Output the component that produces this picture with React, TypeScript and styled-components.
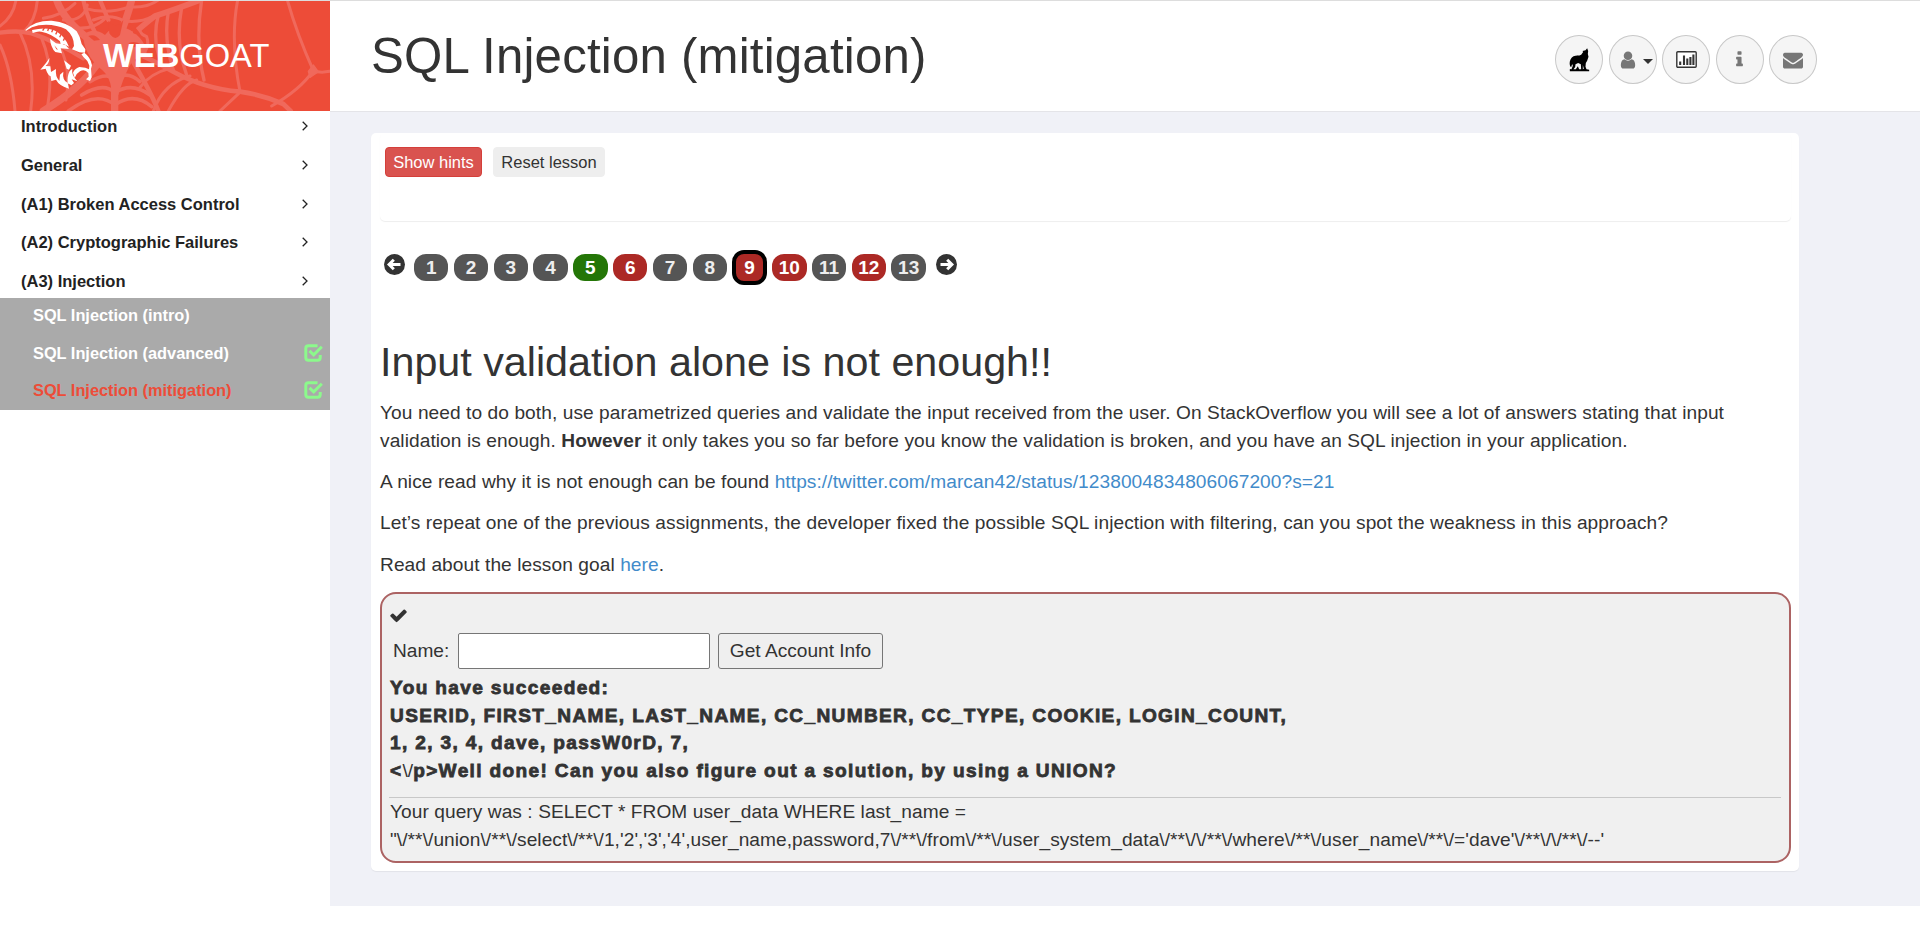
import React from "react";
import styled, { createGlobalStyle, css } from "styled-components";

const GlobalStyle = createGlobalStyle`
  *, *::before, *::after { box-sizing: border-box; }
  html, body { margin: 0; padding: 0; background: #fff; }
  body {
    font-family: "Liberation Sans", Arial, Helvetica, sans-serif;
    font-size: 19.12px;
    line-height: 28.1px;
    color: #333;
  }
`;

const Page = styled.div`
  display: grid;
  grid-template-columns: 330px 1fr;
  grid-template-rows: 111px 794px;
  height: 906px;
  border-top: 1px solid #ddd;
`;

const Brand = styled.div`
  position: relative;
  height: 110px;
  background: #ed4c38;
  overflow: hidden;
`;

const BrandArt = styled.svg`
  position: absolute;
  inset: 0;
  width: 330px;
  height: 110px;
`;

const BrandName = styled.div`
  position: relative;
  padding: 37px 0 0 103px;
  font-size: 32.7px;
  line-height: 36px;
  color: #fff;
`;

const Header = styled.header`
  display: flex;
  justify-content: space-between;
  align-items: flex-start;
  height: 111px;
  padding: 0 103px 0 41px;
  background: #fff;
  border-bottom: 1px solid #e4e4e8;
`;

const LessonTitle = styled.h1`
  margin: 28px 0 0;
  font-size: 49.2px;
  font-weight: 400;
  line-height: 54px;
  letter-spacing: 0.2px;
`;

const HeaderActions = styled.div`
  display: flex;
  gap: 5.4px;
  margin-top: 34px;
`;

const RoundButton = styled.button`
  display: flex;
  align-items: center;
  justify-content: center;
  gap: 5px;
  width: 48px;
  height: 49px;
  padding: 0;
  border: 1px solid #c8c8c8;
  border-radius: 50%;
  background: #f5f5f5;
  color: #777;
`;

const Caret = styled.span`
  border: 5.5px solid transparent;
  border-top: 5.5px solid #333;
  border-bottom: 0;
  margin: 3px -6px 0 0;
`;

const Sidebar = styled.nav`
  background: #fff;
`;

const Category = styled.div`
  display: flex;
  align-items: center;
  justify-content: space-between;
  height: 38.7px;
  padding: 0 22px 0 21px;
  font-size: 16.5px;
  font-weight: 700;
  color: #222;
`;

const CategoryList = styled.div`
  height: 191px;
  margin-top: -5px;
`;

const Lessons = styled.div`
  height: 112px;
  background: #aaa;
`;

const Lesson = styled.div<{ $current?: boolean }>`
  display: flex;
  align-items: center;
  justify-content: space-between;
  height: 37.5px;
  padding: 0 7px 3px 33px;
  font-size: 16.35px;
  font-weight: 700;
  color: ${(p) => (p.$current ? "#ed4c38" : "#fff")};
`;

const Main = styled.main`
  padding: 21px 121px 35px 41px;
  background: #f0f1f7;
`;

const Panel = styled.section`
  height: 738px;
  padding: 0 8px 0 9px;
  border-radius: 5px;
  background: #fff;
  box-shadow: 0 1px 1px rgba(0, 0, 0, 0.06);
`;

const Toolbar = styled.div`
  display: flex;
  gap: 11px;
  height: 88px;
  padding: 14px 5px;
  border-radius: 5px;
  box-shadow: 0 1px 1px rgba(0, 0, 0, 0.07);
`;

const ToolButton = styled.button<{ $danger?: boolean }>`
  width: ${(p) => (p.$danger ? 97 : 112)}px;
  height: 30px;
  padding: 0;
  border: 1px solid ${(p) => (p.$danger ? "#d43f3a" : "#eee")};
  border-radius: 4px;
  background: ${(p) => (p.$danger ? "#d9534f" : "#eee")};
  color: ${(p) => (p.$danger ? "#fff" : "#333")};
  font: inherit;
  font-size: 16.5px;
  line-height: 28px;
  white-space: nowrap;
`;

const Pager = styled.div`
  display: flex;
  align-items: center;
  gap: 5.4px;
  height: 35px;
  margin: 29px 0 54.5px;
  padding-left: 4px;
`;

const ArrowSlot = styled.span<{ $last?: boolean }>`
  display: flex;
  height: 27px;
  margin: ${(p) => (p.$last ? "0 0 0 4.5px" : "0 3.7px 0 0")};
`;

type PageState = "plain" | "solved" | "open";
const stateColor: Record<PageState, string> = {
  plain: "#555",
  solved: "#247607",
  open: "#ac2925",
};

const PageLink = styled.span<{ $state: PageState; $active?: boolean }>`
  display: flex;
  align-items: center;
  justify-content: center;
  width: 34.4px;
  height: 26.5px;
  border-radius: 12px;
  background: ${(p) => stateColor[p.$state]};
  color: ${(p) => (p.$state === "plain" ? "#eee" : "#fff")};
  font-size: 19px;
  font-weight: 700;
  line-height: 26px;
  ${(p) =>
    p.$active &&
    css`
      height: 34.5px;
      border: 4px solid #000;
    `}
`;

const PageHeading = styled.h1`
  margin: 0 0 14.5px;
  font-size: 41.25px;
  font-weight: 400;
  line-height: 45px;
`;

const Paragraph = styled.p`
  margin: 0 0 13.1px;
  letter-spacing: 0.08px;
`;

const Link = styled.a`
  color: #428bca;
  text-decoration: none;
`;

const Assignment = styled.div`
  height: 271px;
  padding: 0 8px 0 7px;
  border: 2px solid #ac6363;
  border-radius: 16px;
  background: #f0f0f0;
`;

const SolvedMark = styled.div`
  display: flex;
  align-items: center;
  height: 39px;
  padding-top: 4px;
`;

const FormRow = styled.form`
  display: flex;
  align-items: center;
  height: 36px;
  margin-bottom: 5px;
  padding-left: 4px;
`;

const NameLabel = styled.label`
  width: 65px;
`;

const NameInput = styled.input`
  width: 252px;
  height: 36px;
  border: 1px solid #767676;
  border-radius: 2px;
  background: #fff;
`;

const SubmitButton = styled.button`
  width: 165px;
  height: 36px;
  margin-left: 8px;
  padding: 0;
  border: 1px solid #767676;
  border-radius: 3px;
  background: #efefef;
  color: #333;
  font: inherit;
`;

const Feedback = styled.div`
  padding-left: 1px;
  font-size: 19.1px;
  font-weight: 700;
  line-height: 27.8px;
  letter-spacing: 1.34px;
  -webkit-text-stroke: 0.8px #333;
`;

const Output = styled.div`
  margin-top: 11.5px;
  padding-left: 1px;
  border-top: 1px solid #c8c8c8;
  letter-spacing: 0.07px;
`;

const Thin = styled.span`
  font-weight: 400;
  -webkit-text-stroke: 0;
  letter-spacing: 0;
`;

const Glyph = ({ d, size, color }: { d: string; size: number; color?: string }) => (
  <svg width={size} height={size} viewBox="0 0 1792 1792" fill={color ?? "currentColor"}>
    <path d={d} />
  </svg>
);

const glyphs = {
  user: "M1536 1399q0 109-62.5 187t-150.5 78H469q-88 0-150.5-78T256 1399q0-85 8.5-160.5t31.5-152 58.5-131 94-89T583 832q131 128 313 128t313-128q76 0 134.5 34.5t94 89 58.5 131 31.5 152 8.5 160.5zm-256-887q0 159-112.5 271.5T896 896 624.5 783.5 512 512t112.5-271.5T896 128t271.5 112.5T1280 512z",
  info: "M1216 1344v128q0 26-19 45t-45 19H640q-26 0-45-19t-19-45v-128q0-26 19-45t45-19h64V896h-64q-26 0-45-19t-19-45V704q0-26 19-45t45-19h384q26 0 45 19t19 45v576h64q26 0 45 19t19 45zm-128-1152v192q0 26-19 45t-45 19H768q-26 0-45-19t-19-45V192q0-26 19-45t45-19h256q26 0 45 19t19 45z",
  mail: "M1792 710v794q0 66-47 113t-113 47H160q-66 0-113-47T0 1504V710q44 49 101 87 362 246 497 345 57 42 92.5 65.5t94.5 48 110 24.5h2q51 0 110-24.5t94.5-48 92.5-65.5q170-123 498-345 57-39 100-87zm0-294q0 79-49 151t-122 123q-376 261-468 325-10 7-42.5 31t-54 38.5-52 32.5-57.5 27-50 9h-2q-23 0-50-9t-57.5-27-52-32.5-54-38.5-42.5-31q-91-64-262-182.5T170 690q-62-42-117-115.5T0 438q0-78 41.5-130T160 256h1472q65 0 112.5 47t47.5 113z",
  check: "M1671 566q0 40-28 68l-724 724-136 136q-28 28-68 28t-68-28l-136-136-362-362q-28-28-28-68t28-68l136-136q28-28 68-28t68 28l294 295 656-657q28-28 68-28t68 28l136 136q28 28 28 68z",
};

const Chevron = () => (
  <svg width="6" height="10" viewBox="0 0 6 10" fill="none" stroke="#222" strokeWidth="1.3">
    <path d="M0.7 0.7L5 5L0.7 9.3" />
  </svg>
);

const CheckBox = () => (
  <svg width="19" height="18" viewBox="0 0 19 18" fill="none" stroke="#8cf98c" strokeWidth="3">
    <path d="M13.5 1.8H4.5Q1.8 1.8 1.8 4.5V13.5Q1.8 16.2 4.5 16.2H13.5Q16.2 16.2 16.2 13.5V11" />
    <path d="M5.5 6.8L9.7 10.8L17.8 2.8" />
  </svg>
);

const CircleArrow = ({ back }: { back?: boolean }) => (
  <svg width="21" height="21" viewBox="0 0 21 21">
    <circle cx="10.5" cy="10.5" r="10.5" fill="#333" />
    <path
      d={back ? "M16.5 10.5H6M9.8 5.8L5.1 10.5L9.8 15.2" : "M4.5 10.5H15M11.2 5.8L15.9 10.5L11.2 15.2"}
      fill="none"
      stroke="#fff"
      strokeWidth="3"
    />
  </svg>
);

const Wolf = () => (
  <svg width="21" height="24" viewBox="88 86 62 72">
    <path
      fill="#000"
      d="M142 87L145 95L144 104L146 112L142 124L138 131L137 142L140 150L148 151V156H90V149L95 150L99 139L97 134L94 144L91 141C87 130 91 116 101 111C109 107 117 110 124 106L130 98L128 95L137 93Z"
    />
    <path fill="#f5f5f5" d="M107 135L115 131L123 135L124 150H118L114 141L108 150H101L106 143ZM129 137L132 148L129 150Z" />
  </svg>
);

const StatsIcon = () => (
  <svg width="21" height="17" viewBox="0 0 21 17">
    <rect x="0.8" y="0.8" width="19.4" height="15.4" rx="1" fill="#fff" stroke="#333" strokeWidth="1.4" />
    <path d="M4.2 14V10.5M8 14V4.5M11.3 14V7.5M14.4 14V6M17.4 14V3.5" stroke="#333" strokeWidth="2.1" />
  </svg>
);

const Art = () => (
  <BrandArt viewBox="0 3 990 330" preserveAspectRatio="none">
    <g fill="none" stroke="#f0695c" strokeWidth="9" strokeLinecap="round" strokeLinejoin="round">
      <path d="M0 98Q55 90 95 100Q170 125 250 175" strokeWidth="13" />
      <path d="M0 78Q40 50 48 0M72 95Q108 60 112 0" />
      <path d="M170 0Q190 60 270 120" strokeWidth="22" />
      <path d="M250 0Q262 60 300 125M300 0L325 60" strokeWidth="13" />
      <path d="M130 55Q190 45 225 10M190 60Q250 65 262 15M235 85Q290 85 320 50" />
      <path d="M395 0Q380 60 350 130" strokeWidth="22" />
      <path d="M255 25Q320 45 390 20Q440 25 475 0M280 60Q330 40 370 62Q420 70 460 48" />
      <path d="M600 0Q520 30 465 48Q430 75 385 115" strokeWidth="17" />
      <path d="M475 45Q455 120 485 190M505 35Q490 120 520 210M545 22Q525 130 560 225M605 0Q585 130 612 240" strokeWidth="10" />
      <path d="M713 0Q690 120 720 275M430 75Q405 95 440 110Q450 140 430 160" />
      <path d="M385 150Q450 175 520 215Q610 265 720 275Q790 285 850 312L872 333" strokeWidth="14" />
      <path d="M862 0Q890 100 940 212Q960 220 990 214M940 212Q900 270 815 318M722 275L660 333" />
      <path d="M925 214L940 195L955 216Q940 225 930 232Z" fill="#f0695c" strokeWidth="4" />
      <path d="M570 228Q490 250 460 333M510 205Q450 220 420 262M590 240Q550 250 505 333" />
      <path d="M390 170Q450 270 475 333" strokeWidth="14" />
      <path d="M344 175V333" strokeWidth="22" />
      <path d="M270 245Q320 215 345 238Q380 210 420 245M245 285Q310 245 345 278Q395 245 450 285M205 333Q290 270 345 315Q400 275 455 320" strokeWidth="11" />
      <path d="M300 180Q250 260 130 333" strokeWidth="22" />
      <path d="M0 135Q35 210 45 333M60 98Q110 200 92 333M125 115Q165 210 140 333M178 140Q215 200 198 300" />
    </g>
    <path
      d="M250 105Q280 80 315 105Q345 65 390 90Q440 120 440 165Q400 170 385 205Q368 240 355 285H335Q335 230 300 205Q250 160 250 105Z"
      fill="#f0695c"
    />
    <path
      d="M325 62Q350 90 370 60L360 105Q345 125 328 100ZM388 70Q410 80 425 110L400 100ZM265 108Q285 100 300 120L282 122ZM385 130Q405 120 425 135L400 142Z"
      fill="#ed4c38"
    />
    <g fill="#fff">
      <path d="M76 90Q104 61 155 62Q205 67 230 94Q242 112 245 132L256 148L255 158L238 157L216 148L222 138Q222 108 198 88Q162 70 116 76Q95 80 78 92Z" />
      <path d="M96 90Q145 78 172 96Q196 112 207 140L191 132L183 138L180 124Q153 100 124 95Q112 93 98 99Z" />
      <path
        d="M150 116L168 130L196 134L207 147L182 145L186 160L166 156Q152 142 150 116ZM163 136L169 148L174 149Z"
        fillRule="evenodd"
      />
      <path d="M253 158Q264 165 272 182L276 196L273 206L275 232L270 243L258 238L266 230L265 219Q254 205 240 214Q229 220 224 234L219 218Q224 206 238 201L256 203L267 208L268 197L262 183L251 172L244 163Z" />
      <path d="M148 174Q141 187 121 209L137 206Q143 225 152 229L154 243L168 239Q177 257 207 266L203 250L214 256L222 249L215 238L232 244Q213 223 217 206L209 213Q201 229 203 249Q186 240 190 215L180 224L178 243Q165 229 168 207L153 216L151 199L137 198Q149 188 148 174Z" />
      <path d="M192 181L213 197L207 209L200 206Z" />
    </g>
    <path
      d="M134 82L128 92M147 82L143 93M160 85L155 97M173 91L167 103M185 99L179 112M196 110L190 122"
      stroke="#ed4c38"
      strokeWidth="4"
    />
  </BrandArt>
);

const categories = [
  "Introduction",
  "General",
  "(A1) Broken Access Control",
  "(A2) Cryptographic Failures",
  "(A3) Injection",
];

const lessons = [
  { name: "SQL Injection (intro)" },
  { name: "SQL Injection (advanced)", solved: true },
  { name: "SQL Injection (mitigation)", solved: true, current: true },
];

const pageStates: PageState[] = [
  "plain", "plain", "plain", "plain", "solved", "open", "plain",
  "plain", "open", "open", "plain", "open", "plain",
];

const query =
  "\"\\/**\\/union\\/**\\/select\\/**\\/1,'2','3','4',user_name,password,7\\/**\\/from\\/**\\/user_system_data\\/**\\/\\/**\\/where\\/**\\/user_name\\/**\\/='dave'\\/**\\/\\/**\\/--'";

export default function App() {
  return (
    <>
      <GlobalStyle />
      <Page>
        <Brand>
          <Art />
          <BrandName>
            <b>WEB</b>GOAT
          </BrandName>
        </Brand>
        <Header>
          <LessonTitle>SQL Injection (mitigation)</LessonTitle>
          <HeaderActions>
            <RoundButton aria-label="WebWolf"><Wolf /></RoundButton>
            <RoundButton aria-label="User">
              <Glyph d={glyphs.user} size={20} />
              <Caret />
            </RoundButton>
            <RoundButton aria-label="Report card"><StatsIcon /></RoundButton>
            <RoundButton aria-label="About"><Glyph d={glyphs.info} size={19} /></RoundButton>
            <RoundButton aria-label="Contact"><Glyph d={glyphs.mail} size={20} /></RoundButton>
          </HeaderActions>
        </Header>
        <Sidebar>
          <CategoryList>
            {categories.map((name) => (
              <Category key={name}>
                {name}
                <Chevron />
              </Category>
            ))}
          </CategoryList>
          <Lessons>
            {lessons.map((l) => (
              <Lesson key={l.name} $current={l.current}>
                {l.name}
                {l.solved && <CheckBox />}
              </Lesson>
            ))}
          </Lessons>
        </Sidebar>
        <Main>
          <Panel>
            <Toolbar>
              <ToolButton $danger>Show hints</ToolButton>
              <ToolButton>Reset lesson</ToolButton>
            </Toolbar>
            <Pager>
              <ArrowSlot><CircleArrow back /></ArrowSlot>
              {pageStates.map((state, i) => (
                <PageLink key={i} $state={state} $active={i === 8}>
                  {i + 1}
                </PageLink>
              ))}
              <ArrowSlot $last><CircleArrow /></ArrowSlot>
            </Pager>
            <PageHeading>Input validation alone is not enough!!</PageHeading>
            <Paragraph>
              You need to do both, use parametrized queries and validate the input received from the user. On
              StackOverflow you will see a lot of answers stating that input
              <br />
              validation is enough. <b>However</b> it only takes you so far before you know the validation is
              broken, and you have an SQL injection in your application.
            </Paragraph>
            <Paragraph>
              A nice read why it is not enough can be found{" "}
              <Link>https://twitter.com/marcan42/status/1238004834806067200?s=21</Link>
            </Paragraph>
            <Paragraph>
              Let’s repeat one of the previous assignments, the developer fixed the possible SQL injection with
              filtering, can you spot the weakness in this approach?
            </Paragraph>
            <Paragraph>
              Read about the lesson goal <Link>here</Link>.
            </Paragraph>
            <Assignment>
              <SolvedMark>
                <Glyph d={glyphs.check} size={19} color="#333" />
              </SolvedMark>
              <FormRow>
                <NameLabel>Name:</NameLabel>
                <NameInput />
                <SubmitButton type="button">Get Account Info</SubmitButton>
              </FormRow>
              <Feedback>
                You have succeeded:
                <br />
                USERID, FIRST_NAME, LAST_NAME, CC_NUMBER, CC_TYPE, COOKIE, LOGIN_COUNT,
                <br />
                1, 2, 3, 4, dave, passW0rD, 7,
                <br />
                &lt;<Thin>\/</Thin>p&gt;Well done! Can you also figure out a solution, by using a UNION?
              </Feedback>
              <Output>
                Your query was : SELECT * FROM user_data WHERE last_name =
                <br />
                {query}
              </Output>
            </Assignment>
          </Panel>
        </Main>
      </Page>
    </>
  );
}
